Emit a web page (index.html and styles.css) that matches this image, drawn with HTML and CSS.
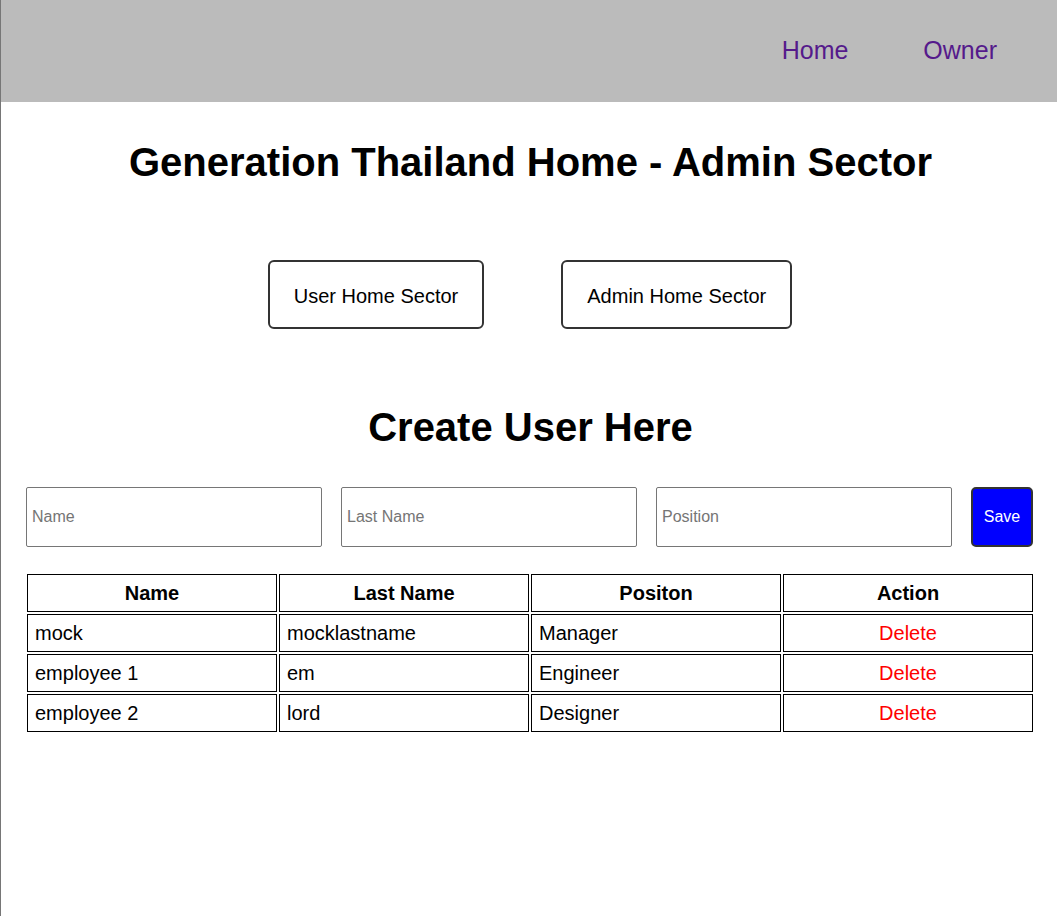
FILE: index.html
```html
<!DOCTYPE html>
<html lang="en">
<head>
<meta charset="utf-8">
<title>Generation Thailand Home - Admin Sector</title>
<link rel="stylesheet" href="styles.css">
</head>
<body>
<div class="page">
  <header class="topbar">
    <nav class="nav">
      <a class="nav-link" href="#">Home</a>
      <a class="nav-link" href="#">Owner</a>
    </nav>
  </header>

  <h1 class="title">Generation Thailand Home - Admin Sector</h1>

  <div class="sector-buttons">
    <button class="sector-btn" type="button">User Home Sector</button>
    <button class="sector-btn" type="button">Admin Home Sector</button>
  </div>

  <h2 class="subtitle">Create User Here</h2>

  <form class="create-form">
    <input class="field" type="text" placeholder="Name">
    <input class="field" type="text" placeholder="Last Name">
    <input class="field" type="text" placeholder="Position">
    <button class="save-btn" type="button">Save</button>
  </form>

  <table class="users">
    <thead>
      <tr>
        <th>Name</th>
        <th>Last Name</th>
        <th>Positon</th>
        <th>Action</th>
      </tr>
    </thead>
    <tbody>
      <tr>
        <td>mock</td>
        <td>mocklastname</td>
        <td>Manager</td>
        <td class="action">Delete</td>
      </tr>
      <tr>
        <td>employee 1</td>
        <td>em</td>
        <td>Engineer</td>
        <td class="action">Delete</td>
      </tr>
      <tr>
        <td>employee 2</td>
        <td>lord</td>
        <td>Designer</td>
        <td class="action">Delete</td>
      </tr>
    </tbody>
  </table>
</div>
</body>
</html>
```
FILE: styles.css
```css
* {
  box-sizing: border-box;
}

html, body {
  margin: 0;
  padding: 0;
  background: #ffffff;
}

body {
  font-family: "Liberation Sans", Arial, sans-serif;
  color: #000000;
}

.page {
  min-height: 916px;
  border-left: 1px solid #767676;
  display: flex;
  flex-direction: column;
}

.topbar {
  height: 102px;
  background: #bbbbbb;
  display: flex;
  align-items: center;
  justify-content: flex-end;
  padding: 0 60px 2px 0;
}

.nav {
  display: flex;
  gap: 75px;
}

.nav-link {
  font-size: 25px;
  color: #551a8b;
  text-decoration: none;
}

.title {
  margin: 37px 0 0;
  padding-left: 3px;
  font-size: 40px;
  font-weight: bold;
  text-align: center;
  line-height: 46px;
}

.sector-buttons {
  margin-top: 75px;
  display: flex;
  justify-content: center;
  gap: 77px;
  padding-left: 2px;
}

.sector-btn {
  font-family: "Liberation Sans", Arial, sans-serif;
  font-size: 20px;
  line-height: 24px;
  color: #000000;
  background: #ffffff;
  border: 2px solid #333333;
  border-radius: 6px;
  padding: 22px 24px 19px;
}

.subtitle {
  margin: 75px 0 0;
  padding-left: 3px;
  font-size: 40px;
  font-weight: bold;
  text-align: center;
  line-height: 46px;
}

.create-form {
  margin: 37px 24px 0 25px;
  display: flex;
  justify-content: space-between;
  align-items: stretch;
}

.field {
  width: 296px;
  height: 60px;
  border: 1px solid #767676;
  border-radius: 2px;
  padding: 0 5px;
  font-family: "Liberation Sans", Arial, sans-serif;
  font-size: 16px;
  background: #ffffff;
}

.field::placeholder {
  color: #757575;
}

.save-btn {
  width: 62px;
  height: 60px;
  background: #0000ff;
  color: #ffffff;
  border: 2px solid #333333;
  border-radius: 5px;
  font-family: "Liberation Sans", Arial, sans-serif;
  font-size: 16px;
  padding: 0;
}

.users {
  width: calc(100% - 46px);
  margin: 25px 22px 0 24px;
  border-collapse: separate;
  border-spacing: 2px;
  table-layout: fixed;
}

.users th,
.users td {
  border: 1px solid #000000;
  font-size: 20px;
  line-height: 24px;
  padding: 6px 7px;
  text-align: left;
}

.users th {
  font-weight: bold;
  text-align: center;
}

.users td.action {
  color: #ff0000;
  text-align: center;
}
```
